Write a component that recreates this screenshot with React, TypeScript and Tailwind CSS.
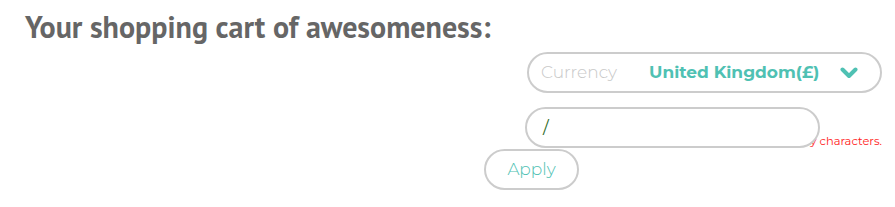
import React from "react";

const body = { fontFamily: "Montserrat, Inter, 'Open Sans', sans-serif" };

function Chevron() {
  return (
    <svg width="18" height="12" viewBox="0 0 18 12" className="text-[#4fc1b3]">
      <path d="M2.5 2.5 L9 9 L15.5 2.5" fill="none" stroke="currentColor" strokeWidth="4" strokeLinecap="round" strokeLinejoin="round" />
    </svg>
  );
}

export default function App() {
  return (
    <div className="w-[895px] h-[207px] bg-white" style={body}>
      <h2
        className="pl-[25px] pt-[9px] text-[30px] leading-[35px] font-bold text-[#666666]"
        style={{ fontFamily: "'PT Sans', 'Open Sans', 'DejaVu Sans Condensed', sans-serif" }}
      >
        Your shopping cart of awesomeness:
      </h2>
      <div className="ml-auto mr-[13px] mt-[8px] w-[398px] flex flex-col">
        <div className="ml-[43px] w-[355px] h-[41px] rounded-full border-2 border-[#cccccc] flex items-center pl-[12px] pr-[22px]">
          <span className="text-[17px] text-[#c8c8c8] font-light w-[108px]">Currency</span>
          <span className="text-[17px] font-bold text-[#4fc1b3]">United Kingdom(£)</span>
          <span className="ml-auto flex items-center"><Chevron /></span>
        </div>
        <div className="ml-[41px] mt-[14px] relative z-10 w-[295px] h-[41px] rounded-full border-2 border-[#cccccc] bg-white flex items-center pl-[16px]">
          <span className="text-[17px] text-[#2e6b1f]">/</span>
        </div>
        <div className="-mt-[13px] h-[13px] text-right text-[11.5px] leading-[13px] text-[#ff1a1a]">
          Code must not exceed twenty characters.
        </div>
        <button className="mt-[1px] w-[95px] h-[41px] rounded-full border-2 border-[#cccccc] bg-white text-[17px] text-[#4fc1b3] font-light">
          Apply
        </button>
      </div>
    </div>
  );
}
